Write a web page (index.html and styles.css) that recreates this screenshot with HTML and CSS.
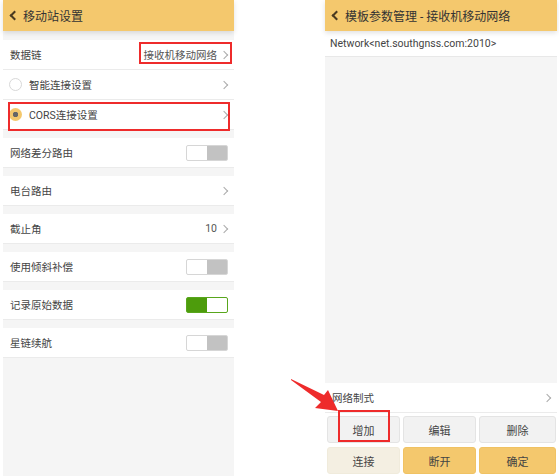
FILE: index.html
```html
<!DOCTYPE html>
<html lang="zh-CN">
<head>
<meta charset="UTF-8">
<title>移动站设置</title>
<link rel="stylesheet" href="styles.css">
</head>
<body>
<div class="screen">
  <div class="phone left">
    <div class="topbar"><span class="back"></span>移动站设置</div>

    <div class="group first">
      <div class="row">
        <span class="label">数据链</span>
        <span class="value">接收机移动网络<span class="chev"></span></span>
      </div>
      <div class="row">
        <span class="radio"></span>
        <span class="label">智能连接设置</span>
        <span class="value"><span class="chev"></span></span>
      </div>
      <div class="row">
        <span class="radio checked"></span>
        <span class="label">CORS连接设置</span>
        <span class="value"><span class="chev"></span></span>
      </div>
    </div>

    <div class="group">
      <div class="row">
        <span class="label">网络差分路由</span>
        <span class="switch"></span>
      </div>
    </div>
    <div class="group">
      <div class="row">
        <span class="label">电台路由</span>
        <span class="value"><span class="chev"></span></span>
      </div>
    </div>
    <div class="group">
      <div class="row">
        <span class="label">截止角</span>
        <span class="value">10<span class="chev"></span></span>
      </div>
    </div>
    <div class="group">
      <div class="row">
        <span class="label">使用倾斜补偿</span>
        <span class="switch"></span>
      </div>
    </div>
    <div class="group">
      <div class="row">
        <span class="label">记录原始数据</span>
        <span class="switch on"></span>
      </div>
    </div>
    <div class="group">
      <div class="row">
        <span class="label">星链续航</span>
        <span class="switch"></span>
      </div>
    </div>

    <div class="mark mark-link"></div>
    <div class="mark mark-cors"></div>
  </div>

  <div class="phone right">
    <div class="topbar"><span class="back"></span>模板参数管理 - 接收机移动网络</div>
    <div class="net-row">Network&lt;net.southgnss.com:2010&gt;</div>
    <div class="filler"></div>
    <div class="row mode-row">
      <span class="label">网络制式</span>
      <span class="value"><span class="chev"></span></span>
    </div>
    <div class="buttons">
      <div class="btn">增加</div>
      <div class="btn">编辑</div>
      <div class="btn">删除</div>
      <div class="btn cream">连接</div>
      <div class="btn gold">断开</div>
      <div class="btn gold">确定</div>
    </div>
    <div class="mark mark-add"></div>
  </div>

  <svg class="arrow" width="60" height="40" viewBox="0 0 60 40">
    <polygon points="0,0 33,16 37,11 47,32 24,29 30,23 0,1" fill="#ee2b2b"/>
  </svg>
</div>
</body>
</html>
```

FILE: styles.css
```css
body {
  margin: 0;
  background: #fff;
  font-family: Roboto, "Noto Sans CJK SC", sans-serif;
  color: #444;
}
.screen {
  position: relative;
  display: flex;
  gap: 91px;
  padding-left: 3px;
  height: 476px;
  overflow: hidden;
}
.phone {
  position: relative;
  width: 231px;
  height: 476px;
  background: #f5f5f5;
  display: flex;
  flex-direction: column;
}
.phone.right {
  width: 232px;
}
.topbar {
  height: 31px;
  flex: none;
  background: #f4c86d;
  box-shadow: 0 2px 5px rgba(0,0,0,0.12);
  display: flex;
  align-items: center;
  font-size: 12px;
  color: #333;
  position: relative;
  z-index: 1;
}
.back {
  width: 5px;
  height: 5px;
  border-left: 2px solid #4a3a20;
  border-bottom: 2px solid #4a3a20;
  transform: rotate(45deg);
  margin: 0 5px 0 8px;
}
.group {
  margin-top: 8px;
  background: #fff;
}
.group.first {
  margin-top: 9px;
}
.row {
  height: 30px;
  box-sizing: border-box;
  border-bottom: 1px solid #ebebeb;
  background: #fff;
  display: flex;
  align-items: center;
  padding: 0 5px 0 7px;
  font-size: 10.5px;
}
.label {
  flex: 1;
}
.value {
  display: flex;
  align-items: center;
  color: #555;
}
.chev {
  width: 5px;
  height: 5px;
  border-top: 1px solid #aaa;
  border-right: 1px solid #aaa;
  transform: rotate(45deg);
  margin: 0 2px 0 4px;
}
.radio {
  width: 13px;
  height: 13px;
  border-radius: 50%;
  border: 1px solid #d8d8d8;
  background: #fff;
  margin: 0 7px 0 -1px;
  box-sizing: border-box;
}
.radio.checked {
  border: none;
  background: radial-gradient(circle, #666 0 2.5px, #f4c86d 3px);
}
.switch {
  width: 42px;
  height: 16px;
  box-sizing: border-box;
  border: 1px solid #d6d6d6;
  border-radius: 2px;
  background: linear-gradient(to right, #fff 0 50%, #c2c2c2 50%);
  margin-right: 1px;
}
.switch.on {
  border-color: #58a61c;
  background: linear-gradient(to right, #4d9c0c 0 50%, #fff 50%);
}
.net-row {
  height: 26px;
  box-sizing: border-box;
  background: #fff;
  border-bottom: 1px solid #e8e8e8;
  font-size: 10.5px;
  display: flex;
  align-items: center;
  padding-left: 5px;
  color: #444;
}
.filler {
  flex: 1;
}
.mode-row {
  height: 30px;
  padding-left: 7px;
}
.buttons {
  background: #fff;
  display: grid;
  grid-template-columns: 73px 73px 77px;
  gap: 4px 3px;
  padding: 3px 1px 2px 2px;
}
.btn {
  height: 27px;
  border: 1px solid #e4e4e4;
  border-radius: 3px;
  background: #f2f2f2;
  box-sizing: border-box;
  display: flex;
  align-items: center;
  justify-content: center;
  font-size: 11px;
  color: #444;
}
.btn.cream {
  background: #f4efe2;
  border-color: #f0ebdc;
}
.btn.gold {
  background: #f4c86d;
  border-color: #f0c263;
}
.mark {
  position: absolute;
  border: 2px solid #ee2b2b;
  box-sizing: border-box;
}
.mark-link {
  left: 136px;
  top: 42px;
  width: 93px;
  height: 22px;
}
.mark-cors {
  left: 5px;
  top: 102px;
  width: 222px;
  height: 29px;
}
.mark-add {
  left: 13px;
  top: 410px;
  width: 52px;
  height: 32px;
}
.arrow {
  position: absolute;
  left: 291px;
  top: 379px;
}
```
